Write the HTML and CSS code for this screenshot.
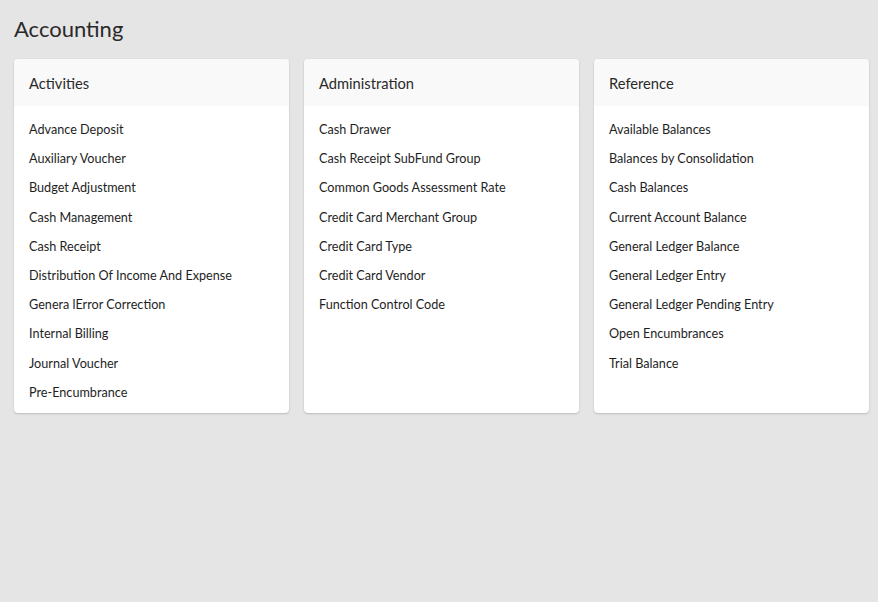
FILE: index.html
```html
<!DOCTYPE html>
<html lang="en">
<head>
<meta charset="utf-8">
<title>Accounting</title>
<link rel="stylesheet" href="styles.css">
</head>
<body>
<main class="page">
  <h1 class="page-title">Accounting</h1>
  <div class="cards">
    <section class="card">
      <h2 class="card-title">Activities</h2>
      <ul class="card-list">
        <li>Advance Deposit</li>
        <li>Auxiliary Voucher</li>
        <li>Budget Adjustment</li>
        <li>Cash Management</li>
        <li>Cash Receipt</li>
        <li>Distribution Of Income And Expense</li>
        <li>Genera lError Correction</li>
        <li>Internal Billing</li>
        <li>Journal Voucher</li>
        <li>Pre-Encumbrance</li>
      </ul>
    </section>
    <section class="card">
      <h2 class="card-title">Administration</h2>
      <ul class="card-list">
        <li>Cash Drawer</li>
        <li>Cash Receipt SubFund Group</li>
        <li>Common Goods Assessment Rate</li>
        <li>Credit Card Merchant Group</li>
        <li>Credit Card Type</li>
        <li>Credit Card Vendor</li>
        <li>Function Control Code</li>
      </ul>
    </section>
    <section class="card">
      <h2 class="card-title">Reference</h2>
      <ul class="card-list">
        <li>Available Balances</li>
        <li>Balances by Consolidation</li>
        <li>Cash Balances</li>
        <li>Current Account Balance</li>
        <li>General Ledger Balance</li>
        <li>General Ledger Entry</li>
        <li>General Ledger Pending Entry</li>
        <li>Open Encumbrances</li>
        <li>Trial Balance</li>
      </ul>
    </section>
  </div>
</main>
</body>
</html>
```
FILE: styles.css
```css
* { box-sizing: border-box; }
html, body { margin: 0; padding: 0; }
body {
  background: #e5e5e5;
  font-family: Lato, "Open Sans", sans-serif;
  color: #222;
  width: 878px;
  height: 602px;
}
.page {
  padding: 15px 9px 14px 14px;
}
.page-title {
  margin: 0 0 17px;
  font-size: 22px;
  font-weight: 400;
  line-height: 27px;
  color: #2a2a2a;
}
.cards {
  display: grid;
  grid-template-columns: repeat(3, 275px);
  column-gap: 15px;
}
.card {
  background: #fff;
  border-radius: 4px;
  box-shadow: 0 1px 2px rgba(0,0,0,0.18), 0 0 1px rgba(0,0,0,0.08);
  overflow: hidden;
  padding-bottom: 6px;
}
.card-title {
  margin: 0;
  background: #f9f9f9;
  font-size: 14.7px;
  font-weight: 400;
  line-height: 19px;
  padding: 15px 15px 13px;
  color: #2a2a2a;
}
.card-list {
  list-style: none;
  margin: 0;
  padding: 9px 15px 0;
}
.card-list li {
  font-size: 12.65px;
  line-height: 29.2px;
  color: #1e1e1e;
}
```
